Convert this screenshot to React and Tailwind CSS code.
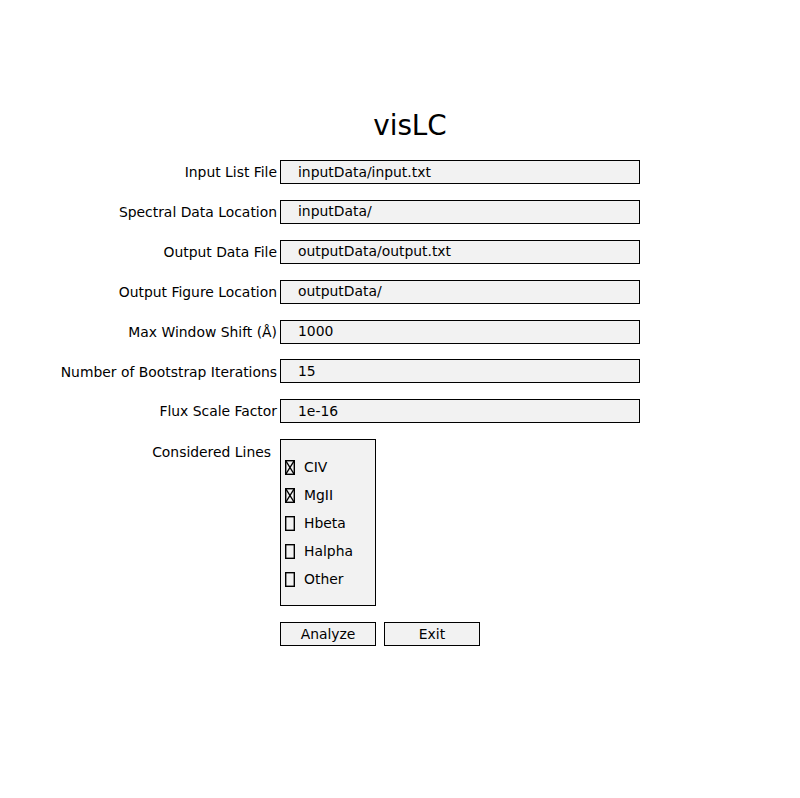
import React from "react";

const font = { fontFamily: '"DejaVu Sans", sans-serif' };

const fields = [
  ["Input List File", "inputData/input.txt"],
  ["Spectral Data Location", "inputData/"],
  ["Output Data File", "outputData/output.txt"],
  ["Output Figure Location", "outputData/"],
  ["Max Window Shift (Å)", "1000"],
  ["Number of Bootstrap Iterations", "15"],
  ["Flux Scale Factor", "1e-16"],
];

const lines = [
  ["CIV", true],
  ["MgII", true],
  ["Hbeta", false],
  ["Halpha", false],
  ["Other", false],
];

function Check({ checked }) {
  return (
    <svg width="10" height="15" viewBox="0 0 10 15" className="block">
      <rect x="0.7" y="0.7" width="8.6" height="13.6" fill="none" stroke="black" strokeWidth="1.4" />
      {checked && (
        <>
          <line x1="0.7" y1="0.7" x2="9.3" y2="14.3" stroke="black" strokeWidth="1.3" />
          <line x1="9.3" y1="0.7" x2="0.7" y2="14.3" stroke="black" strokeWidth="1.3" />
        </>
      )}
    </svg>
  );
}

export default function App() {
  return (
    <div
      className="w-[800px] h-[798px] bg-white text-black flex flex-col pt-[105px]"
      style={font}
    >
      <div className="h-[40px] flex items-center justify-center pl-[20px] text-[27.8px] leading-none pt-[1px]">
        visLC
      </div>
      <div className="mt-[15px] flex flex-col gap-[15.9px]">
        {fields.map(([label, value]) => (
          <div key={label} className="flex items-center h-[24px]">
            <div className="w-[277px] text-right text-[13.9px] leading-none pt-[2px] whitespace-nowrap">
              {label}
            </div>
            <div className="ml-[3px] w-[360px] h-[24px] border border-black bg-[#f2f2f2] flex items-center pl-[17px] pt-[1px] text-[13.9px] leading-none">
              {value}
            </div>
          </div>
        ))}
        <div className="flex items-start">
          <div className="w-[271px] text-right text-[13.9px] leading-none pt-[7px] whitespace-nowrap">
            Considered Lines
          </div>
          <div className="ml-[9px] w-[96px] h-[167px] border border-black bg-[#f2f2f2] pt-[13px] flex flex-col">
            {lines.map(([name, checked]) => (
              <div key={name} className="h-[28px] flex items-center pl-[4px]">
                <div className="pt-[1px]">
                  <Check checked={checked} />
                </div>
                <span className="ml-[9px] pt-[2px] text-[13.9px] leading-none">{name}</span>
              </div>
            ))}
          </div>
        </div>
      </div>
      <div className="mt-[16px] flex pl-[280px] gap-[8px]">
        <div className="w-[96px] h-[24px] border border-black bg-[#f2f2f2] flex items-center justify-center pt-[2px] text-[13.9px] leading-none">
          Analyze
        </div>
        <div className="w-[96px] h-[24px] border border-black bg-[#f2f2f2] flex items-center justify-center pt-[2px] text-[13.9px] leading-none">
          Exit
        </div>
      </div>
    </div>
  );
}
